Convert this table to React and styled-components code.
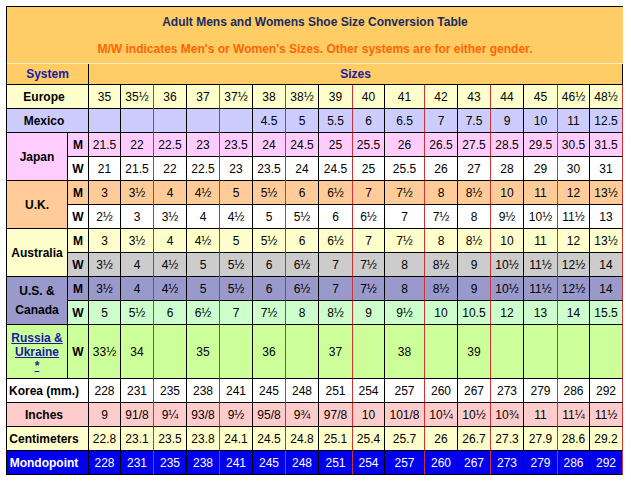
import React from 'react';
import styled, { createGlobalStyle } from 'styled-components';

const GlobalStyle = createGlobalStyle`
  body {
    margin: 0;
    background: #ffffff;
    font-family: "Liberation Sans", Arial, sans-serif;
  }
`;

const COLS = [61, 21, 32, 33, 33, 33, 33, 33, 33, 34, 32, 40, 33, 33, 33, 34, 32, 33];
const ROWS = [57, 21, 24, 24, 24, 24, 24, 24, 24, 24, 24, 24, 54, 24, 24, 24, 24];

const ROWS_DATA = [
  { label: 'Europe', bg: '#ffffcc', values: ['35', '35½', '36', '37', '37½', '38', '38½', '39', '40', '41', '42', '43', '44', '45', '46½', '48½'] },
  { label: 'Mexico', bg: '#ccccff', values: ['', '', '', '', '', '4.5', '5', '5.5', '6', '6.5', '7', '7.5', '9', '10', '11', '12.5'] },
  {
    label: 'Japan', bg: '#ffccff', pair: [
      { sub: 'M', bg: '#ffccff', values: ['21.5', '22', '22.5', '23', '23.5', '24', '24.5', '25', '25.5', '26', '26.5', '27.5', '28.5', '29.5', '30.5', '31.5'] },
      { sub: 'W', bg: '#ffffff', values: ['21', '21.5', '22', '22.5', '23', '23.5', '24', '24.5', '25', '25.5', '26', '27', '28', '29', '30', '31'] },
    ],
  },
  {
    label: 'U.K.', bg: '#ffcc99', pair: [
      { sub: 'M', bg: '#ffcc99', values: ['3', '3½', '4', '4½', '5', '5½', '6', '6½', '7', '7½', '8', '8½', '10', '11', '12', '13½'] },
      { sub: 'W', bg: '#ffffff', values: ['2½', '3', '3½', '4', '4½', '5', '5½', '6', '6½', '7', '7½', '8', '9½', '10½', '11½', '13'] },
    ],
  },
  {
    label: 'Australia', bg: '#ffffcc', pair: [
      { sub: 'M', bg: '#ffffcc', values: ['3', '3½', '4', '4½', '5', '5½', '6', '6½', '7', '7½', '8', '8½', '10', '11', '12', '13½'] },
      { sub: 'W', bg: '#cccccc', values: ['3½', '4', '4½', '5', '5½', '6', '6½', '7', '7½', '8', '8½', '9', '10½', '11½', '12½', '14'] },
    ],
  },
  {
    label: ['U.S. &', 'Canada'], tall: true, bg: '#9999cc', pair: [
      { sub: 'M', bg: '#9999cc', values: ['3½', '4', '4½', '5', '5½', '6', '6½', '7', '7½', '8', '8½', '9', '10½', '11½', '12½', '14'] },
      { sub: 'W', bg: '#ccffcc', values: ['5', '5½', '6', '6½', '7', '7½', '8', '8½', '9', '9½', '10', '10.5', '12', '13', '14', '15.5'] },
    ],
  },
];

const BOTTOM_ROWS = [
  { label: 'Korea (mm.)', bg: '#ffffff', values: ['228', '231', '235', '238', '241', '245', '248', '251', '254', '257', '260', '267', '273', '279', '286', '292'] },
  { label: 'Inches', bg: '#ffcccc', values: ['9', '91/8', '9¼', '93/8', '9½', '95/8', '9¾', '97/8', '10', '101/8', '10¼', '10½', '10¾', '11', '11¼', '11½'] },
  { label: 'Centimeters', bg: '#ffffcc', values: ['22.8', '23.1', '23.5', '23.8', '24.1', '24.5', '24.8', '25.1', '25.4', '25.7', '26', '26.7', '27.3', '27.9', '28.6', '29.2'] },
  { label: 'Mondopoint', bg: '#0000ee', ink: '#ffffff', values: ['228', '231', '235', '238', '241', '245', '248', '251', '254', '257', '260', '267', '273', '279', '286', '292'] },
];

const RUSSIA = ['33½', '34', '', '35', '', '36', '', '37', '', '38', '', '39', '', '', '', ''];

function Values({ values, bg, ink }) {
  return values.map((v, i) => (
    <Value key={i} $bg={bg} $ink={ink} $red={i % 2 === 1}>{v}</Value>
  ));
}

export default function App() {
  return (
    <Page>
      <GlobalStyle />
      <Grid>
        <TitleCell>
          <Heading>Adult Mens and Womens Shoe Size Conversion Table</Heading>
          <Note>M/W indicates Men's or Women's Sizes. Other systems are for either gender.</Note>
        </TitleCell>

        <HeadCell $span={2}>System</HeadCell>
        <HeadCell $span={16}>Sizes</HeadCell>

        {ROWS_DATA.map((row) =>
          row.pair ? (
            <React.Fragment key={row.sub || row.label}>
              <Label $bg={row.bg} $rows={2} $tall={row.tall}>
                {Array.isArray(row.label) ? row.label.map((l) => <span key={l}>{l}</span>) : row.label}
              </Label>
              {row.pair.map((p) => (
                <React.Fragment key={p.sub}>
                  <Sub $bg={p.bg}>{p.sub}</Sub>
                  <Values values={p.values} bg={p.bg} />
                </React.Fragment>
              ))}
            </React.Fragment>
          ) : (
            <React.Fragment key={row.label}>
              <Label $bg={row.bg} $span={2}>{row.label}</Label>
              <Values values={row.values} bg={row.bg} />
            </React.Fragment>
          )
        )}

        <Label $bg="#ccff99">
          <RussiaLink href="#russia">
            <span>Russia &amp;</span>
            <span>Ukraine</span>
            <span>*</span>
          </RussiaLink>
        </Label>
        <Sub $bg="#ccff99">W</Sub>
        <Values values={RUSSIA} bg="#ccff99" />

        {BOTTOM_ROWS.map((row) => (
          <React.Fragment key={row.label}>
            <Label $bg={row.bg} $ink={row.ink} $span={2}>{row.label}</Label>
            <Values values={row.values} bg={row.bg} ink={row.ink} />
          </React.Fragment>
        ))}
      </Grid>
    </Page>
  );
}

const Page = styled.div`
  padding: 6px;
`;

const Grid = styled.div`
  display: grid;
  grid-template-columns: ${COLS.map((c) => c + 'px').join(' ')};
  grid-template-rows: ${ROWS.map((r) => r + 'px').join(' ')};
  width: max-content;
  border-top: 1px solid #000000;
  border-left: 1px solid #000000;
  font-size: 12px;
  color: #000000;
`;

const Cell = styled.div`
  box-sizing: border-box;
  display: flex;
  align-items: center;
  justify-content: center;
  border-right: 1px solid #000000;
  border-bottom: 1px solid #000000;
  white-space: nowrap;
  overflow: visible;
`;

const TitleCell = styled.div`
  grid-column: 1 / -1;
  box-sizing: border-box;
  display: flex;
  flex-direction: column;
  align-items: center;
  gap: 12px;
  padding-top: 8px;
  background: #ffcc66;
  border-bottom: 1px solid #ffeebb;
  font-weight: bold;
  line-height: 15px;
`;

const Heading = styled.div`
  color: #1b2a5e;
`;

const Note = styled.div`
  color: #ff6600;
`;

const HeadCell = styled(Cell)`
  grid-column: span ${(p) => p.$span};
  background: #ffcc66;
  color: #1a1aa6;
  font-weight: bold;
`;

const Label = styled(Cell)`
  grid-column: span ${(p) => p.$span || 1};
  grid-row: span ${(p) => p.$rows || 1};
  flex-direction: column;
  line-height: ${(p) => (p.$tall ? '19px' : '14px')};
  padding-right: ${(p) => (p.$span === 2 ? '7px' : '0')};
  background: ${(p) => p.$bg};
  color: ${(p) => p.$ink || '#000000'};
  font-weight: bold;
`;

const Sub = styled(Cell)`
  background: ${(p) => p.$bg};
  font-weight: bold;
`;

const Value = styled(Cell)`
  background: ${(p) => p.$bg};
  color: ${(p) => p.$ink || '#000000'};
  border-right-color: ${(p) => (p.$red ? '#cc3333' : '#000000')};
`;

const RussiaLink = styled.a`
  display: flex;
  flex-direction: column;
  align-items: center;
  color: #1a1aa6;
  line-height: 14px;
  text-decoration: underline;
`;
